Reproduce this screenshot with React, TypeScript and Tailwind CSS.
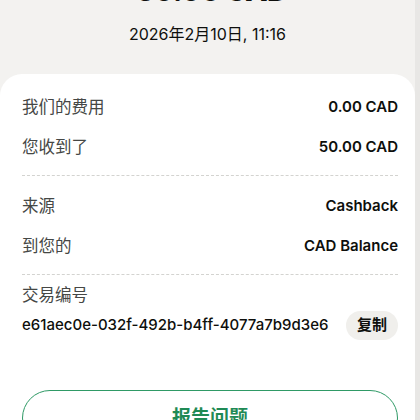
const font = { fontFamily: 'Inter, "Noto Sans CJK SC", sans-serif' };

function Row({ label, value }: { label: string; value: string }) {
  return (
    <div className="h-[40px] flex items-center justify-between">
      <span className="text-[16.5px] text-[#454745]">{label}</span>
      <span className="text-[15px] font-semibold text-[#0e0f0c]">{value}</span>
    </div>
  );
}

function Divider() {
  return <div className="border-t border-dashed border-[#d3d3d0]" />;
}

export default function App() {
  return (
    <div className="w-[420px] h-[420px] overflow-hidden bg-[#f3f2f0] flex" style={font}>
      <div className="w-[415px] flex flex-col">
        <div className="h-[74px] flex flex-col items-center shrink-0">
          <div className="text-[29px] font-extrabold leading-[36px] -mt-[27px] ml-[8px] text-[#0e0f0c] tracking-tight">
            50.00 CAD
          </div>
          <div className="mt-[13px] text-[16px] leading-[24px] text-[#0e0f0c]">2026年2月10日, 11:16</div>
        </div>
        <div className="flex-1 bg-white rounded-t-[22px] pl-[22px] pr-[17px] pt-[13px]">
          <Row label="我们的费用" value="0.00 CAD" />
          <Row label="您收到了" value="50.00 CAD" />
          <div className="mt-[8px] mb-[10px]">
            <Divider />
          </div>
          <Row label="来源" value="Cashback" />
          <Row label="到您的" value="CAD Balance" />
          <div className="mt-[8px] mb-[6px]">
            <Divider />
          </div>
          <div className="text-[16.5px] leading-[28px] text-[#454745]">交易编号</div>
          <div className="mt-[2px] flex items-center justify-between">
            <span className="text-[15px] font-medium text-[#0e0f0c]">e61aec0e-032f-492b-b4ff-4077a7b9d3e6</span>
            <button className="h-[29px] px-[11px] rounded-full bg-[#f0efec] text-[15px] font-semibold text-[#0e0f0c]">
              复制
            </button>
          </div>
          <button className="mt-[50px] w-full h-[56px] rounded-full border border-[#2f9a66] text-[19px] font-semibold text-[#1f8a55]">
            报告问题
          </button>
        </div>
      </div>
      <div className="w-[5px] bg-[#e8e7e5]" />
    </div>
  );
}
